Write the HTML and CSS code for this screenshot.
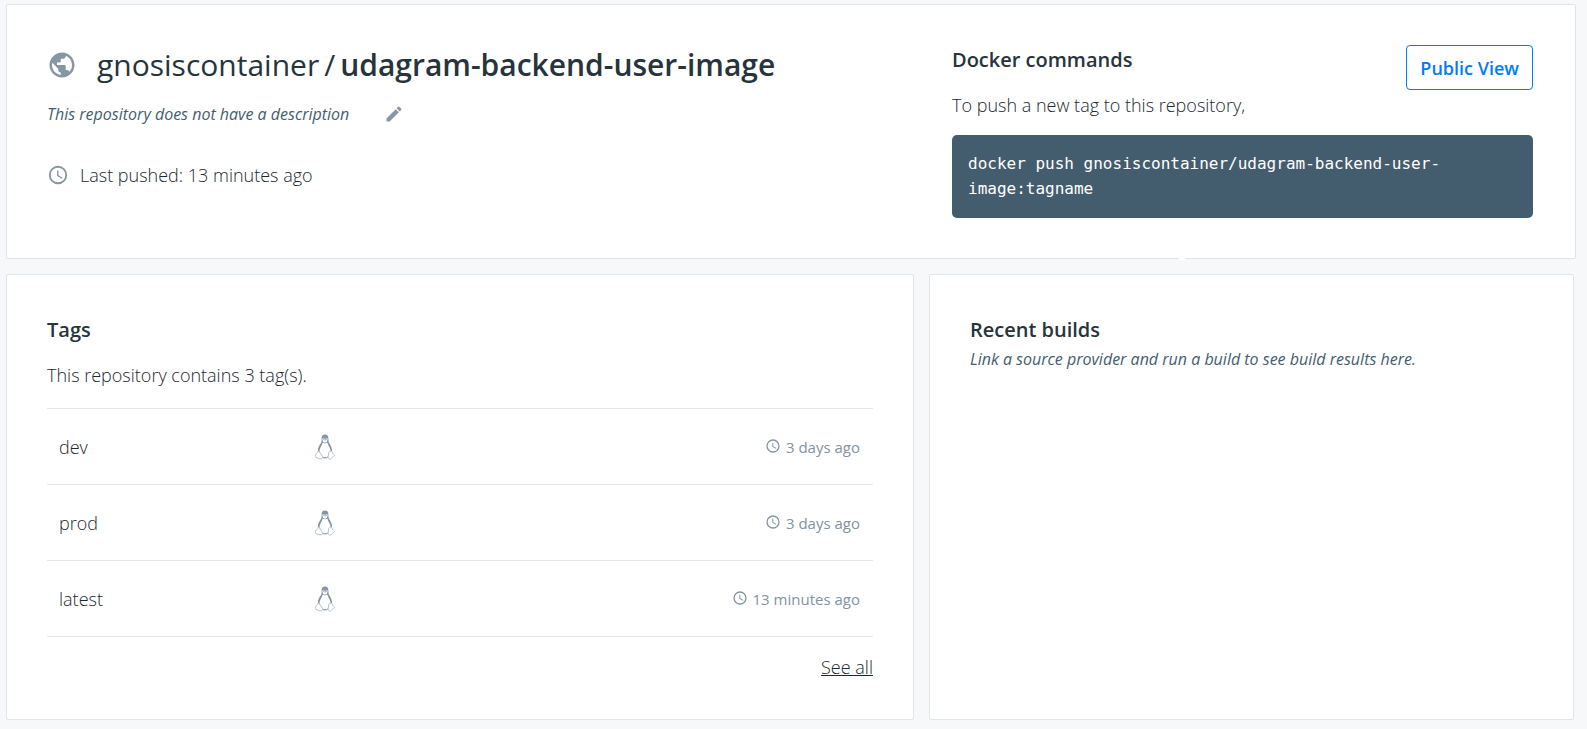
FILE: index.html
```html
<!DOCTYPE html>
<html lang="en">
<head>
<meta charset="utf-8">
<title>gnosiscontainer/udagram-backend-user-image</title>
<link rel="stylesheet" href="styles.css">
</head>
<body>
<svg class="symbols" aria-hidden="true">
  <symbol id="clock" viewBox="0 0 24 24"><path d="M12 2a10 10 0 1 0 0 20 10 10 0 0 0 0-20zm0 18a8 8 0 1 1 0-16 8 8 0 0 1 0 16zm.5-13H11v6l5.200 3.200.8-1.300-4.500-2.700z"/></symbol>
  <symbol id="tux" viewBox="0 0 20 26">
    <path class="tux-body" d="M10 .5C7.600.5 6.500 2 6.600 4.200c.1 2.300.1 3.700-1 5.400C4.300 11.500 3 13.600 2.800 16.500L6 21.500c1 2.300 2 3 4 3s3-.7 4-3l3.200-5c-.2-3-1.500-5-2.700-7-1.100-1.700-1.100-3.200-1.100-5.300C13.400 2 12.400.5 10 .5z"/>
    <path class="tux-light" d="M7.800 8.500c1.500 1 3 1 4.500 0 .5 2.200 2 4 2.900 6.500.7 2 .3 4-1.200 5.500-1 2-2 2.800-4 2.800s-3-.8-3.800-2.600C4.600 19 4.200 17 4.900 15c.9-2.500 2.400-4.300 2.900-6.500z"/>
    <path class="tux-light" d="M7.400 4.500h2.100v2H7.400zM10.600 4.500h2v2h-2zM8 6.500h4v1.300l-2 1-2-1z"/>
    <path class="tux-foot" d="M3.400 17.200c1.500.4 2.500 3 3.900 5 .8 1.500-.5 3-2.200 2.600-1.600-.4-2.600-1-4.100-1.200-.8-.3-.4-1.700-.4-2.600-.4-1.400 1.600-1 1.900-2.300.1-.7.300-1.300.9-1.500zM13.800 18.200c.4-1 2.600-1.500 3.400-.4.200 1.700 1 2.300 2.100 3.200.7 1-.7 1.600-1.600 2.200-1 .8-1.800 2.200-3.300 1.900-1.700-.4-1.300-2-1-3.500z"/>
    <path class="tux-eye" d="M8 5h1v1H8zM11 5h1v1h-1z"/>
  </symbol>
</svg>
<main class="page">
  <section class="card summary">
    <div class="repo">
      <h1 class="repo-title">
        <svg class="icon globe" viewBox="0 0 24 24" aria-hidden="true"><path d="M12 2C6.480 2 2 6.480 2 12s4.480 10 10 10 10-4.480 10-10S17.520 2 12 2zm-1 17.930c-3.950-.49-7-3.850-7-7.930 0-.62.080-1.210.21-1.790L9 15v1c0 1.100.9 2 2 2v1.930zm6.900-2.540c-.26-.81-1-1.390-1.900-1.390h-1v-3c0-.55-.45-1-1-1H8v-2h2c.55 0 1-.45 1-1V7h2c1.100 0 2-.9 2-2v-.41c2.930 1.190 5 4.060 5 7.410 0 2.080-.8 3.970-2.100 5.390z"/></svg>
        <span class="repo-path"><span>gnosiscontainer</span><span>/</span><strong>udagram-backend-user-image</strong></span>
      </h1>
      <div class="description">
        <em class="note">This repository does not have a description</em>
        <button class="edit" type="button" aria-label="Edit description"><svg class="icon pencil" viewBox="0 0 24 24" aria-hidden="true"><path d="M3 17.250V21h3.750L17.810 9.940l-3.750-3.750L3 17.250zM20.710 7.040a1 1 0 0 0 0-1.410l-2.340-2.340a1 1 0 0 0-1.410 0l-1.830 1.830 3.750 3.750 1.830-1.830z"/></svg></button>
      </div>
      <p class="pushed"><svg class="icon clock" aria-hidden="true"><use href="#clock"/></svg>Last pushed: 13 minutes ago</p>
    </div>
    <div class="commands">
      <div class="commands-head">
        <div>
          <h2 class="heading">Docker commands</h2>
          <p class="text">To push a new tag to this repository,</p>
        </div>
        <button class="public-view" type="button">Public View</button>
      </div>
      <pre class="code"><code>docker push gnosiscontainer/udagram-backend-user-image:tagname</code></pre>
    </div>
  </section>
  <div class="columns">
    <section class="card panel">
      <h2 class="heading">Tags</h2>
      <p class="text">This repository contains 3 tag(s).</p>
      <table class="tags">
        <tbody>
          <tr><td class="tag">dev</td><td><svg class="tux" role="img" aria-label="Linux"><use href="#tux"/></svg></td><td class="age"><svg class="icon small-clock" aria-hidden="true"><use href="#clock"/></svg>3 days ago</td></tr>
          <tr><td class="tag">prod</td><td><svg class="tux" role="img" aria-label="Linux"><use href="#tux"/></svg></td><td class="age"><svg class="icon small-clock" aria-hidden="true"><use href="#clock"/></svg>3 days ago</td></tr>
          <tr><td class="tag">latest</td><td><svg class="tux" role="img" aria-label="Linux"><use href="#tux"/></svg></td><td class="age"><svg class="icon small-clock" aria-hidden="true"><use href="#clock"/></svg>13 minutes ago</td></tr>
        </tbody>
      </table>
      <p class="more"><a class="see-all" href="#tags">See all</a></p>
    </section>
    <section class="card panel">
      <h2 class="heading">Recent builds</h2>
      <p class="note">Link a source provider and run a build to see build results here.</p>
    </section>
  </div>
</main>
</body>
</html>
```
FILE: styles.css
```css
* { box-sizing: border-box; }
body {
  margin: 0;
  background: #f7f8fa;
  color: #1c282f;
  font: 300 18px/28px "Open Sans", sans-serif;
}
h1, h2, p, pre { margin: 0; }
.symbols { position: absolute; width: 0; height: 0; }
.page { padding: 4px 11px 9px 6px; }
.card {
  position: relative;
  background: #fff;
  border: 1px solid #e1e4e8;
  border-radius: 2px;
}
.icon { flex: none; fill: #8697a3; }

.summary {
  display: grid;
  grid-template-columns: minmax(0, 905fr) minmax(0, 581fr);
  padding: 40px 42px 40px 40px;
}
.summary::after {
  content: "";
  position: absolute;
  right: 390px;
  bottom: -2px;
  width: 6px;
  height: 3px;
  background: #fff;
}
.repo-title {
  display: flex;
  align-items: center;
  gap: 20px;
  color: #27343b;
  font-size: 30px;
  font-weight: 400;
  line-height: 40px;
}
.repo-path { display: flex; gap: 5px; white-space: nowrap; }
.repo-path strong { font-weight: 600; }
.globe { width: 30px; height: 30px; }
.description { display: flex; align-items: center; gap: 35px; margin-top: 15px; }
.note { color: #445d6e; font-size: 16px; font-weight: 400; line-height: 28px; font-style: italic; }
.edit { display: flex; padding: 0; border: 0; background: none; }
.pencil { width: 20px; height: 20px; }
.pushed { display: flex; align-items: center; gap: 11px; margin-top: 33px; }
.clock { width: 22px; height: 22px; }

.commands-head { display: flex; justify-content: space-between; align-items: flex-start; }
.heading { color: #27343b; font-size: 20px; line-height: 30px; font-weight: 600; }
.text { margin-top: 16px; }
.public-view {
  height: 45px;
  padding: 0 13px;
  border: 1px solid #007bff;
  border-radius: 4px;
  background: #fff;
  color: #007bff;
  font: 600 18px/28px "Open Sans", sans-serif;
}
.code {
  margin-top: 16px;
  padding: 16px 16px 17px;
  border-radius: 5px;
  background: #445d6e;
  color: #fff;
  font: 16px/25px "DejaVu Sans Mono", monospace;
  white-space: pre-wrap;
}
.code code { font: inherit; }

.columns {
  display: grid;
  grid-template-columns: minmax(0, 908fr) minmax(0, 645fr);
  gap: 15px;
  margin: 15px 2px 0 0;
}
.panel { padding: 40px 40px 38px; }
.tags { width: 100%; margin-top: 19px; border-collapse: collapse; table-layout: fixed; }
.tags td { height: 76px; padding: 0 13px 0 12px; border: solid #e1e4e8; border-width: 1px 0; vertical-align: middle; }
.tags .tag { width: 31%; }
.tags .age { width: 40%; text-align: right; color: #8393a0; font-size: 15px; font-weight: 400; }
.tux { display: block; width: 20px; height: 26px; }
.tux-body { fill: #8697a3; }
.tux-light { fill: #fff; }
.tux-foot { fill: #fff; stroke: #b8c3cb; stroke-width: 1; }
.tux-eye { fill: #b8c3cb; }
.small-clock { width: 16px; height: 16px; margin-right: 5px; vertical-align: -1px; }
.more { margin-top: 16px; text-align: right; }
.see-all { color: inherit; text-decoration: underline; }
```
